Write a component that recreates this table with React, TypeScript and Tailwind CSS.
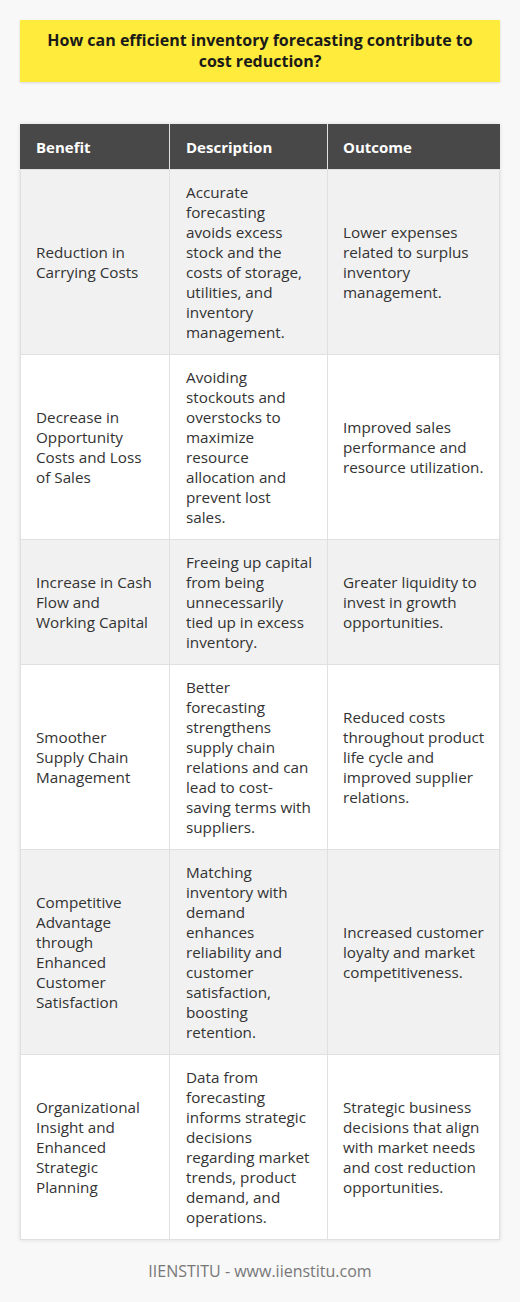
import type { ReactNode } from 'react';

const rows: { benefit: string; description: ReactNode; outcome: string }[] = [
  {
    benefit: 'Reduction in Carrying Costs',
    description:
      'Accurate forecasting avoids excess stock and the costs of storage, utilities, and inventory management.',
    outcome: 'Lower expenses related to surplus inventory management.',
  },
  {
    benefit: 'Decrease in Opportunity Costs and Loss of Sales',
    description:
      'Avoiding stockouts and overstocks to maximize resource allocation and prevent lost sales.',
    outcome: 'Improved sales performance and resource utilization.',
  },
  {
    benefit: 'Increase in Cash Flow and Working Capital',
    description: (
      <>
        <span className="whitespace-nowrap">Freeing up capital</span> from being unnecessarily tied up in excess
        inventory.
      </>
    ),
    outcome: 'Greater liquidity to invest in growth opportunities.',
  },
  {
    benefit: 'Smoother Supply Chain Management',
    description:
      'Better forecasting strengthens supply chain relations and can lead to cost-saving terms with suppliers.',
    outcome: 'Reduced costs throughout product life cycle and improved supplier relations.',
  },
  {
    benefit: 'Competitive Advantage through Enhanced Customer Satisfaction',
    description:
      'Matching inventory with demand enhances reliability and customer satisfaction, boosting retention.',
    outcome: 'Increased customer loyalty and market competitiveness.',
  },
  {
    benefit: 'Organizational Insight and Enhanced Strategic Planning',
    description:
      'Data from forecasting informs strategic decisions regarding market trends, product demand, and operations.',
    outcome: 'Strategic business decisions that align with market needs and cost reduction opportunities.',
  },
];

export default function App() {
  return (
    <div className="min-h-[1302px] bg-[#f8f8f8] px-5 pt-5 font-['Open_Sans',sans-serif]">
      <div className="bg-[#ffeb3b] px-6 py-[10px] text-center text-[16px] font-bold leading-[21px] text-[#1a1a1a] shadow-sm">
        How can efficient inventory forecasting contribute to cost reduction?
      </div>

      <table className="mt-[42px] w-full table-fixed border-collapse text-left text-[15.25px] leading-[20px] shadow-[0_0_4px_rgba(0,0,0,0.12)]">
        <colgroup>
          <col className="w-[149px]" />
          <col className="w-[158px]" />
          <col />
        </colgroup>
        <thead>
          <tr className="bg-[#484848] text-[15px] font-bold text-white">
            <th className="border border-[#e0e0e0] border-t-[#484848] border-l-[#484848] px-[15px] py-3">Benefit</th>
            <th className="border border-[#e0e0e0] border-t-[#484848] px-4 py-3">Description</th>
            <th className="border border-[#e0e0e0] border-t-[#484848] border-r-[#484848] py-3 pl-[15px] pr-[10px]">Outcome</th>
          </tr>
        </thead>
        <tbody className="text-[#333333]">
          {rows.map((row, i) => (
            <tr key={row.benefit} className={i % 2 === 0 ? 'bg-[#f1f1f1]' : 'bg-white'}>
              <td className="border border-[#e0e0e0] px-[15px] py-3 align-middle">{row.benefit}</td>
              <td className="border border-[#e0e0e0] px-4 py-3 align-middle">{row.description}</td>
              <td className="border border-[#e0e0e0] py-3 pl-[15px] pr-[10px] align-middle">{row.outcome}</td>
            </tr>
          ))}
        </tbody>
      </table>

      <p className="mt-[19px] text-center text-[16px] text-[#777777]">IIENSTITU - www.iienstitu.com</p>
    </div>
  );
}
